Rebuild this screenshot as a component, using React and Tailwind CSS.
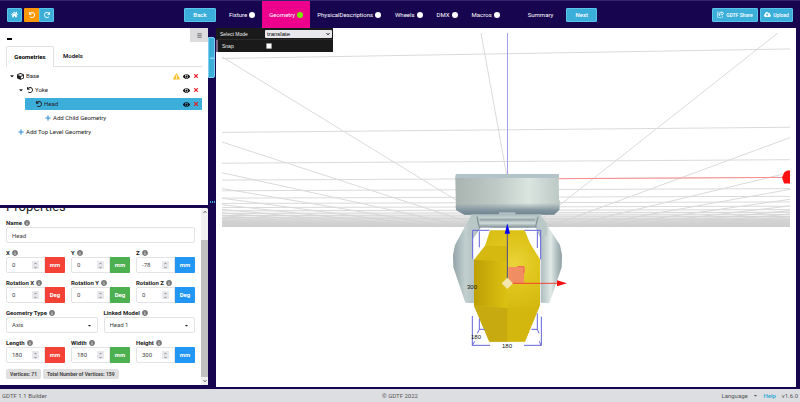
import { FaHome, FaUndo, FaRedo, FaBars, FaCube, FaEye, FaTimes, FaPlus, FaCaretDown, FaInfoCircle, FaExclamationTriangle, FaCloudUploadAlt, FaChevronDown, FaChevronUp, FaMinus } from "react-icons/fa"
import { FaRegShareFromSquare } from "react-icons/fa6"

const steps = [
    { name: "Fixture", dot: "bg-white" },
    { name: "Geometry", dot: "bg-[#76ee00]", active: true },
    { name: "PhysicalDescriptions", dot: "bg-white" },
    { name: "Wheels", dot: "bg-white" },
    { name: "DMX", dot: "bg-white" },
    { name: "Macros", dot: "bg-white" },
    { name: "Summary" },
]

const blueButton = "flex h-[14px] items-center justify-center gap-[2px] rounded-[1px] border border-[#5cc4e8] bg-[#3bafda] font-medium text-white"

function Header() {
    return (
        <header className="flex h-7 shrink-0 items-center border-t border-[#35266f] pr-[7px] pl-[7px] text-white">
            <button aria-label="Home" className={`${blueButton} w-[15px]`}><FaHome className="size-[7px]" /></button>
            <button aria-label="Undo" className="ml-[2px] flex h-[14px] w-[15px] items-center justify-center rounded-l-[1px] bg-[#ff9800]"><FaUndo className="size-[6px]" /></button>
            <button aria-label="Redo" className="flex h-[14px] w-[15px] items-center justify-center rounded-r-[1px] border border-[#5cc4e8] bg-[#3bafda]"><FaRedo className="size-[6px]" /></button>
            <button className={`${blueButton} ml-[130px] w-8`}>Back</button>
            <nav className="ml-[6px] flex h-full items-center">
                {
                    steps.map((step) => <a
                        href="#"
                        key={step.name}
                        className={`flex h-full items-center gap-[2px] ${step.active ? "bg-[#ec008c]" : ""} ${step.dot ? "px-[7px]" : "pr-[6px] pl-[21px]"}`}
                    >
                        {step.name}
                        {step.dot && <span className={`size-[6px] rounded-full ${step.dot}`} />}
                    </a>)
                }
            </nav>
            <button className={`${blueButton} ml-[7px] w-[31px]`}>Next</button>
            <div className="ml-auto flex gap-[2px] text-[5px]">
                <button className={`${blueButton} w-[46px]`}><FaRegShareFromSquare className="size-[7px]" />GDTF Share</button>
                <button className={`${blueButton} w-[33px]`}><FaCloudUploadAlt className="size-[7px]" />Upload</button>
            </div>
        </header>
    )
}

function RowActions({ warning }) {
    return (
        <span className="ml-auto flex items-center gap-[3px] pr-[3px]">
            {warning && <FaExclamationTriangle className="size-[7px] text-[#fbc02d]" />}
            <button aria-label="Toggle visibility"><FaEye className="size-[7px] text-black" /></button>
            <button aria-label="Delete"><FaTimes className="size-[6px] text-[#e31b23]" /></button>
        </span>
    )
}

function GeometryTree() {
    return (
        <section className="flex min-h-0 flex-1 flex-col rounded-tr-[2px] bg-white">
            <div className="flex h-[18px] shrink-0 items-start pl-[7px]">
                <span className="mt-[10px] h-[2px] w-[5px] bg-black" />
                <button aria-label="Menu" className="ml-auto flex h-[14px] w-[18px] items-center justify-center bg-[#dcdcde]"><FaBars className="size-[5px] text-[#444]" /></button>
            </div>
            <div className="mx-[6px] flex h-[21px] shrink-0 text-black">
                <button className="w-12 rounded-t-[2px] border border-b-0 border-[#dee2e6] font-bold">Geometries</button>
                <button className="flex-1 border-b border-[#dee2e6] pl-[9px] text-left font-medium">Models</button>
            </div>
            <ul className="mx-[6px] flex flex-col gap-[2px] pt-[3px] text-[#222]">
                <li className="flex h-3 items-center pl-[3px]">
                    <FaCaretDown className="mr-[2px] size-[6px]" />
                    <FaCube className="mr-[2px] size-[7px]" />Base
                    <RowActions warning />
                </li>
                <li className="flex h-3 items-center pl-3">
                    <FaCaretDown className="mr-[3px] size-[6px]" />
                    <FaUndo className="mr-[2px] size-[6px]" />Yoke
                    <RowActions />
                </li>
                <li className="ml-[19px] flex h-3 items-center rounded-[1px] bg-[#3bafda] pl-[11px]">
                    <FaUndo className="mr-[2px] size-[6px]" />Head
                    <RowActions />
                </li>
                <li className="flex h-3 items-center pl-[39px]">
                    <button className="flex items-center gap-[2px]"><FaPlus className="size-[6px] text-[#2f8fdb]" />Add Child Geometry</button>
                </li>
                <li className="flex h-3 items-center pl-3">
                    <button className="flex items-center gap-[2px]"><FaPlus className="size-[6px] text-[#2f8fdb]" />Add Top Level Geometry</button>
                </li>
            </ul>
        </section>
    )
}

function Label({ id, children }) {
    return (
        <label htmlFor={id} className="flex h-2 items-center gap-[2px] font-bold text-[#222]">
            {children}<FaInfoCircle className="size-[6px] text-[#777]" />
        </label>
    )
}

function NumberField({ id, label, value, unit, color }) {
    return (
        <div>
            <Label id={id}>{label}</Label>
            <div className="flex h-4">
                <div className="flex min-w-0 flex-1 items-center rounded-l-[2px] border border-[#e3e3e6] pr-[5px] pl-[5px]">
                    <input id={id} type="number" defaultValue={value} className="w-full min-w-0 flex-1 [appearance:textfield] outline-none [&::-webkit-inner-spin-button]:appearance-none" />
                    <span className="flex h-2 w-[7px] flex-col items-center justify-center gap-[1px] bg-[#e9e9ed] text-[#555]">
                        <FaChevronUp className="size-[3px]" />
                        <FaChevronDown className="size-[3px]" />
                    </span>
                </div>
                <span className={`flex w-5 items-center justify-center rounded-r-[1px] font-bold text-white ${color}`}>{unit}</span>
            </div>
        </div>
    )
}

function SelectField({ id, label, value }) {
    return (
        <div>
            <Label id={id}>{label}</Label>
            <div className="flex h-4 items-center rounded-[2px] border border-[#e3e3e6] px-[5px]">
                <select id={id} className="flex-1 appearance-none outline-none"><option>{value}</option></select>
                <FaCaretDown className="size-[5px] text-[#222]" />
            </div>
        </div>
    )
}

const red = "bg-[#f44336]"
const green = "bg-[#4caf50]"
const blue = "bg-[#2196f3]"

function Properties() {
    return (
        <section className="flex min-h-0 flex-1 overflow-hidden rounded-tr-[2px] bg-white text-[#444]">
            <div className="flex min-w-0 flex-1 flex-col justify-end gap-[6px] p-[6px]">
                <h2 className="text-[13px] leading-[12px] text-[#222]">Properties</h2>
                <div>
                    <Label id="name">Name</Label>
                    <input id="name" defaultValue="Head" className="h-4 w-full rounded-[2px] border border-[#e3e3e6] px-[5px] outline-none" />
                </div>
                <div className="grid grid-cols-3 gap-[6px]">
                    <NumberField id="x" label="X" value="0" unit="mm" color={red} />
                    <NumberField id="y" label="Y" value="0" unit="mm" color={green} />
                    <NumberField id="z" label="Z" value="-78" unit="mm" color={blue} />
                    <NumberField id="rx" label="Rotation X" value="0" unit="Deg" color={red} />
                    <NumberField id="ry" label="Rotation Y" value="0" unit="Deg" color={green} />
                    <NumberField id="rz" label="Rotation Z" value="0" unit="Deg" color={blue} />
                </div>
                <div className="grid grid-cols-2 gap-[6px]">
                    <SelectField id="type" label="Geometry Type" value="Axis" />
                    <SelectField id="model" label="Linked Model" value="Head 1" />
                </div>
                <div className="grid grid-cols-3 gap-[6px]">
                    <NumberField id="length" label="Length" value="180" unit="mm" color={red} />
                    <NumberField id="width" label="Width" value="180" unit="mm" color={green} />
                    <NumberField id="height" label="Height" value="300" unit="mm" color={blue} />
                </div>
                <div className="flex gap-[2px] text-[5px] leading-[10px] font-bold">
                    <span className="rounded-[2px] bg-[#e0e0e0] px-1">Vertices: 71</span>
                    <span className="rounded-[2px] bg-[#e0e0e0] px-1">Total Number of Vertices: 159</span>
                </div>
            </div>
            <div className="flex w-[7px] flex-col items-center bg-[#f1f1f1] py-[2px] text-[#505050]">
                <FaChevronUp className="size-[4px]" />
                <span className="mt-[26px] mb-[2px] w-full flex-1 bg-[#c1c1c1]" />
                <FaChevronDown className="size-[4px]" />
            </div>
        </section>
    )
}

// floor grid, every line is described by its height at the left and right edge
const horizon = 238
const rows = Array.from({ length: 23 }, (_, n) => [
    horizon - 1 / (0.00557 + 0.0039 * n),
    horizon - 1 / (0.00529 + 0.00374 * n),
])
const rays = Array.from({ length: 17 }, (_, n) => [
    horizon - 1 / (0.00552 + 0.0049 * n),
    horizon - 1 / (0.00466 + 0.0053 * n),
])

function Viewport() {
    return (
        <svg viewBox="216 28 580 359" className="h-full w-full" preserveAspectRatio="xMidYMin meet">
            <defs>
                <clipPath id="floor"><rect x="222" y="33" width="568" height="194" /></clipPath>
                <linearGradient id="fog" x1="0" y1="0" x2="0" y2="1">
                    <stop offset="0" stopColor="#bbb" stopOpacity="0" />
                    <stop offset="1" stopColor="#bbb" stopOpacity="0.4" />
                </linearGradient>
                <linearGradient id="box">
                    <stop offset="0" stopColor="#a9b4b1" />
                    <stop offset="0.4" stopColor="#bfcac6" />
                    <stop offset="0.7" stopColor="#dbe5e0" />
                    <stop offset="1" stopColor="#bcc8c5" />
                </linearGradient>
                <linearGradient id="under" x1="0" y1="0" x2="0" y2="1">
                    <stop offset="0" stopColor="#90a1a8" stopOpacity="0" />
                    <stop offset="0.6" stopColor="#8496a0" />
                    <stop offset="1" stopColor="#6f8290" />
                </linearGradient>
                <linearGradient id="bar" x1="0" y1="0" x2="0" y2="1">
                    <stop offset="0" stopColor="#a9babd" />
                    <stop offset="0.25" stopColor="#c3d0d0" />
                    <stop offset="0.4" stopColor="#93a3a7" />
                    <stop offset="0.65" stopColor="#d3dfdd" />
                    <stop offset="1" stopColor="#7b8c93" />
                </linearGradient>
                <linearGradient id="armLeft">
                    <stop offset="0" stopColor="#93a4a8" />
                    <stop offset="0.45" stopColor="#c1cfce" />
                    <stop offset="0.8" stopColor="#b3c1c2" />
                    <stop offset="1" stopColor="#8b9ba1" />
                </linearGradient>
                <linearGradient id="armRight">
                    <stop offset="0" stopColor="#93a3a8" />
                    <stop offset="0.3" stopColor="#b6c4c5" />
                    <stop offset="0.6" stopColor="#e0eae7" />
                    <stop offset="0.8" stopColor="#b3c1c2" />
                    <stop offset="1" stopColor="#8d9ea4" />
                </linearGradient>
                <radialGradient id="gold" gradientUnits="userSpaceOnUse" cx="252" cy="310" r="150">
                    <stop offset="0" stopColor="#ead43a" />
                    <stop offset="0.45" stopColor="#dfc51c" />
                    <stop offset="1" stopColor="#d3b80f" />
                </radialGradient>
                <linearGradient id="facet">
                    <stop offset="0" stopColor="#bd9f05" />
                    <stop offset="1" stopColor="#dcc112" />
                </linearGradient>
            </defs>

            <g clipPath="url(#floor)" stroke="#dadada" strokeWidth="1">
                {rows.map(([left, right], i) => <line key={i} x1="222" y1={left} x2="790" y2={right} />)}
                {rays.map(([left], i) => <line key={i} x1="222" y1={left} x2="518" y2={horizon} />)}
                {rays.map(([, right], i) => <line key={i} x1="790" y1={right} x2="518" y2={horizon} />)}
                <line x1="481" y1="33" x2="518" y2={horizon} />
                <rect x="222" y="208" width="568" height="19" fill="url(#fog)" stroke="none" />
            </g>
            <line x1="507.5" y1="33" x2="507.5" y2="175" stroke="#a39cf3" />
            <line x1="559" y1="178.7" x2="783" y2="177.4" stroke="#ff8a8a" />
            <polygon points="782,177.5 784.5,172 787.5,170.5 790,170.5 790,183.5 784,183.5" fill="#f11" />

            {/* fixture, drawn at three units per pixel */}
            <g transform="translate(430 160) scale(0.33333)">
                <polygon points="78,42 386,42 387,120 390,122 388,150 372,164 103,164 78,150 76,56" fill="url(#box)" />
                <polygon points="78,42 386,42 387,54 76,54" fill="#b2c4ca" />
                <polygon points="76,134 389,128 388,150 372,164 103,164 78,150" fill="url(#under)" />

                <polygon points="125,163 75,255 69,285 70,322 106,428 133,430 133,300 128,294 128,238 152,203 150,175" fill="url(#armLeft)" />
                <polygon points="330,163 390,255 396,285 395,322 358,430 332,428 332,238 318,203 312,175" fill="url(#armRight)" />
                <polygon points="125,163 335,163 330,182 318,203 148,203 132,190" fill="url(#bar)" />
                <polygon points="120,172 140,164 150,180 146,206 130,232 112,222" fill="#b9c7c7" />
                <polygon points="314,172 330,164 350,190 352,224 334,234 320,204" fill="#bac8c8" />
                <path d="M141 170L147 200M324 170L317 200" stroke="#83949a" strokeWidth="4" fill="none" />
                <polygon points="207,157 256,157 256,164 207,164" fill="#b2c0c4" />
                <polygon points="152,203 134,240 134,296 180,211 182,203" fill="#fff" />
                <polygon points="312,203 284,205 284,211 329,296 331,240 318,213" fill="#fff" />

                <polygon points="180,211 284,211 300,250 330,298 330,436 285,545 178,545 132,437 132,300 165,258" fill="url(#gold)" />
                <polygon points="165,258 232,258 232,303 132,300" fill="#d5b810" />
                <polygon points="132,300 232,303 232,445 132,436" fill="url(#facet)" />
                <polygon points="132,437 232,445 232,545 178,545" fill="#c7a910" />
                <polygon points="232,445 330,436 285,545 232,545" fill="#d3b60e" opacity="0.5" />

                <g stroke="#6262dc" strokeWidth="3" fill="none">
                    <path d="M178 211H128V296M148 214V262M283 211H332V298M322 214V264" />
                    <path d="M127 468V556H180M282 556H334V470M148 476V508H164M148 508L142 520M127 556L134 544M304 508H322V460M322 508L327 520M333 556L328 544" />
                </g>
                <rect x="235" y="321" width="47" height="48" fill="#f2836c" opacity="0.85" />
                <path d="M262 320H282V340" stroke="#f85b5b" strokeWidth="3" fill="none" />
                <path d="M232 370V216" stroke="#4a4a90" strokeWidth="3" />
                <polygon points="232,190 240,221 224,221" fill="#00f" />
                <path d="M232 370H382" stroke="#f44336" strokeWidth="3" />
                <polygon points="411,370 381,379 381,361" fill="#f10f0f" />
                <polygon points="232,353 249,370 232,387 215,370" fill="#f2e7ae" />
            </g>
            <g className="font-['Liberation_Sans',sans-serif] text-[6px]" fill="#111" textAnchor="middle">
                <text x="472" y="289">300</text>
                <text x="476" y="339">180</text>
                <text x="507" y="348">180</text>
            </g>
        </svg>
    )
}

function ModePanel() {
    return (
        <div className="absolute top-0 left-0 w-[117px] bg-[#1a1a1a] font-['Liberation_Sans',sans-serif] text-[5px] text-[#eee]">
            <div className="flex h-3 items-center border-b border-[#2c2c2c] pr-[1px] pl-[4px]">
                <label htmlFor="mode" className="w-[45px]">Select Mode</label>
                <div className="flex h-2 flex-1 items-center rounded-[1px] bg-[#e9e9ed] px-[2px] text-[6px] text-black">
                    <select id="mode" className="flex-1 appearance-none outline-none"><option>translate</option></select>
                    <FaChevronDown className="size-[4px]" />
                </div>
            </div>
            <div className="flex h-3 items-center border-l-2 border-[#806787] pl-[4px]">
                <label htmlFor="snap" className="w-11">Snap</label>
                <input id="snap" type="checkbox" className="size-[6px] appearance-none rounded-[1px] border border-[#999] bg-white" />
            </div>
        </div>
    )
}

function Footer() {
    return (
        <footer className="grid h-[13px] shrink-0 grid-cols-3 items-center bg-[#dddee2] px-[2px] text-[#555]">
            <span>GDTF 1.1 Builder</span>
            <span className="text-center">© GDTF 2022</span>
            <div className="flex items-center justify-end">
                <select aria-label="Language" className="w-8 appearance-none outline-none"><option>Language</option></select>
                <FaCaretDown className="mr-[5px] size-[5px]" />
                <a href="#" className="mr-[6px] font-medium text-[#2ba6d6]">Help</a>
                <span>v1.6.0</span>
            </div>
        </footer>
    )
}

function App() {
    return (
        <div className="flex h-screen flex-col bg-[#180550] font-[Roboto,sans-serif] text-[6px] leading-[8px]">
            <Header />
            <main className="flex min-h-0 flex-1">
                <aside className="flex w-[208px] shrink-0 flex-col gap-[3px] pb-1">
                    <GeometryTree />
                    <Properties />
                </aside>
                <div className="flex w-2 shrink-0 flex-col">
                    <button aria-label="Collapse" className="mt-[9px] flex h-[41px] w-[7px] items-center justify-center rounded-r-[2px] border border-[#7fd0ee] bg-[#3bafda]"><FaMinus className="size-[4px] text-white" /></button>
                    <span className="mt-[123px] flex justify-center gap-[1px]">
                        <i className="h-[2px] w-[1px] bg-[#3bafda]" />
                        <i className="h-[2px] w-[1px] bg-[#3bafda]" />
                        <i className="h-[2px] w-[1px] bg-[#3bafda]" />
                    </span>
                </div>
                <div className="relative mr-1 mb-[2px] min-w-0 flex-1 bg-white">
                    <Viewport />
                    <ModePanel />
                </div>
            </main>
            <Footer />
        </div>
    )
}

export default App
